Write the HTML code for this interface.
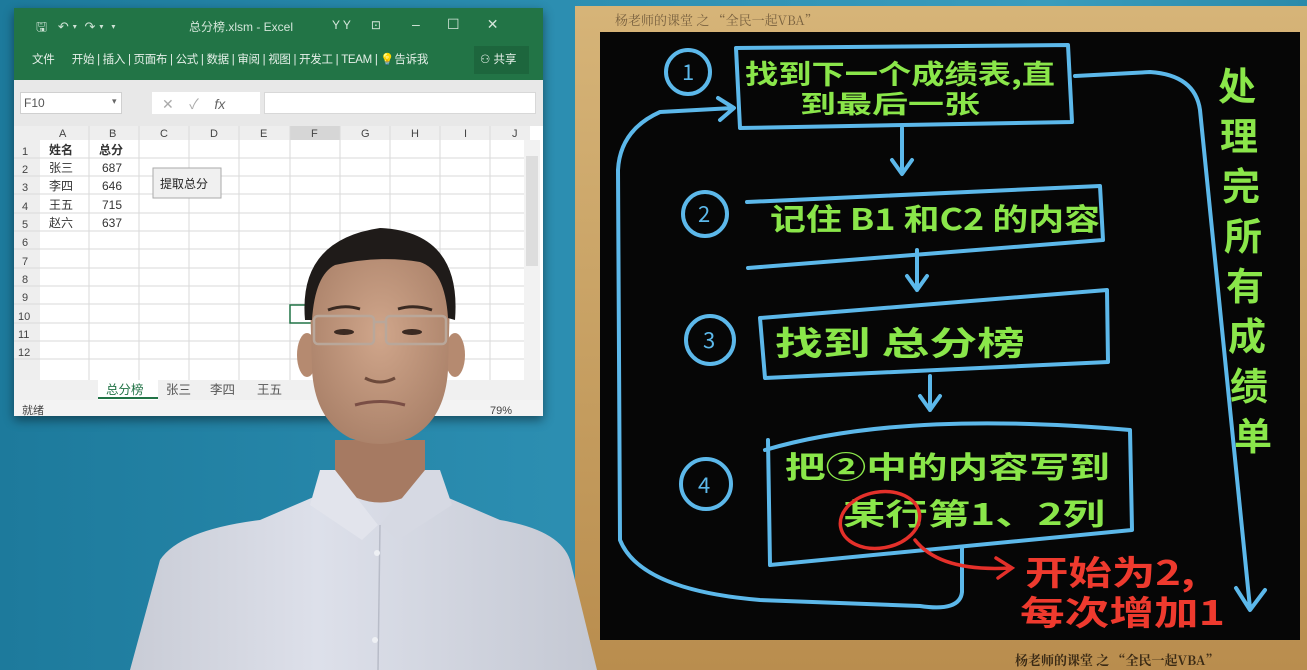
<!DOCTYPE html>
<html><head><meta charset="utf-8"><style>
*{margin:0;padding:0;box-sizing:border-box}
body{width:1307px;height:670px;overflow:hidden;position:relative;background:linear-gradient(90deg,#1d7a9c 0%,#2b8db0 40%,#3a9cbd 80%,#2a8aaa 100%);font-family:"Liberation Sans","Noto Sans CJK SC",sans-serif}
.abs{position:absolute}
#xl{left:14px;top:8px;width:529px;height:408px;background:#fff;box-shadow:0 4px 10px rgba(0,0,0,.45)}
.t{position:absolute;white-space:nowrap}
</style></head><body>
<div id="xl" class="abs">
 <div class="abs" style="left:0;top:0;width:529px;height:72px;background:#227446"></div>
 <div class="t" style="left:22px;top:10px;color:#cfe3d6;font-size:13px">🖫&nbsp;&nbsp;&nbsp;↶ ▾&nbsp;&nbsp;↷ ▾&nbsp;&nbsp;▾</div>
 <div class="t" style="left:175px;top:10px;color:#d4e6da;font-size:12px">总分榜.xlsm - Excel</div>
 <div class="t" style="left:318px;top:10px;color:#d4e6da;font-size:12px">Y Y&nbsp;&nbsp;&nbsp;&nbsp;&nbsp;&nbsp;⊡</div>
 <div class="t" style="left:398px;top:8px;color:#d4e6da;font-size:14px">–&nbsp;&nbsp;&nbsp;&nbsp;&nbsp;&nbsp;&nbsp;☐&nbsp;&nbsp;&nbsp;&nbsp;&nbsp;&nbsp;&nbsp;✕</div>
 <div class="t" style="left:18px;top:43px;color:#e6f0e9;font-size:11.5px;letter-spacing:-0.3px">文件&nbsp;&nbsp;&nbsp;&nbsp;&nbsp;&nbsp;开始 | 插入 | 页面布 | 公式 | 数据 | 审阅 | 视图 | 开发工 | TEAM | 💡告诉我</div>
 <div class="abs" style="left:460px;top:38px;width:55px;height:28px;background:#1d663d"></div>
 <div class="t" style="left:466px;top:43px;color:#e6f0e9;font-size:11.5px">⚇ 共享</div>
 <div class="abs" style="left:0;top:72px;width:529px;height:46px;background:#e8e8e8"></div>
 <div class="abs" style="left:6px;top:84px;width:102px;height:22px;background:#fff;border:1px solid #d0d0d0"></div>
 <div class="t" style="left:10px;top:88px;color:#555;font-size:12px">F10</div>
 <div class="t" style="left:98px;top:88px;color:#666;font-size:9px">▾</div>
 <div class="abs" style="left:138px;top:84px;width:108px;height:22px;background:#fff"></div>
 <div class="t" style="left:148px;top:86px;color:#aaa;font-size:14px">✕&nbsp;&nbsp;&nbsp;&nbsp;✓&nbsp;&nbsp;&nbsp;&nbsp;<i style="color:#666">fx</i></div>
 <div class="abs" style="left:250px;top:84px;width:272px;height:22px;background:#fff;border:1px solid #d8d8d8"></div>
 <svg class="abs" style="left:0;top:118px" width="529" height="290">
  <rect x="0" y="0" width="529" height="290" fill="#fff"/>
  <rect x="0" y="0" width="516" height="14" fill="#eeeeee"/>
  <rect x="0" y="14" width="26" height="240" fill="#eeeeee"/>
  <rect x="276" y="0" width="50" height="14" fill="#d6d6d6"/>
  <g stroke="#dadada" stroke-width="1">
   <line x1="75" y1="0" x2="75" y2="254"/><line x1="125" y1="0" x2="125" y2="254"/><line x1="175" y1="0" x2="175" y2="254"/><line x1="225" y1="0" x2="225" y2="254"/><line x1="276" y1="0" x2="276" y2="254"/><line x1="326" y1="0" x2="326" y2="254"/><line x1="376" y1="0" x2="376" y2="254"/><line x1="426" y1="0" x2="426" y2="254"/><line x1="476" y1="0" x2="476" y2="254"/>
   <line x1="0" y1="32" x2="510" y2="32"/><line x1="0" y1="50" x2="510" y2="50"/><line x1="0" y1="68" x2="510" y2="68"/><line x1="0" y1="87" x2="510" y2="87"/><line x1="0" y1="105" x2="510" y2="105"/><line x1="0" y1="123" x2="510" y2="123"/><line x1="0" y1="142" x2="510" y2="142"/><line x1="0" y1="160" x2="510" y2="160"/><line x1="0" y1="178" x2="510" y2="178"/><line x1="0" y1="197" x2="510" y2="197"/><line x1="0" y1="215" x2="510" y2="215"/><line x1="0" y1="233" x2="510" y2="233"/>
  </g>
  <rect x="276" y="179" width="50" height="18" fill="none" stroke="#217346" stroke-width="1.5"/>
  <rect x="510" y="14" width="16" height="240" fill="#f2f2f2"/><rect x="512" y="30" width="12" height="110" fill="#ddd"/>
  <g font-size="11" fill="#444" font-family="Liberation Sans">
   <text x="45" y="11">A</text><text x="95" y="11">B</text><text x="146" y="11">C</text><text x="196" y="11">D</text><text x="246" y="11">E</text><text x="297" y="11">F</text><text x="347" y="11">G</text><text x="397" y="11">H</text><text x="450" y="11">I</text><text x="498" y="11">J</text>
   <text x="8" y="29">1</text><text x="8" y="47">2</text><text x="8" y="65">3</text><text x="8" y="84">4</text><text x="8" y="102">5</text><text x="8" y="120">6</text><text x="8" y="139">7</text><text x="8" y="157">8</text><text x="8" y="175">9</text><text x="4" y="194">10</text><text x="4" y="212">11</text><text x="4" y="230">12</text>
  </g>
  <g font-size="12" fill="#333" font-family="Liberation Sans,Noto Sans CJK SC">
   <text x="35" y="28" font-weight="bold">姓名</text><text x="85" y="28" font-weight="bold">总分</text>
   <text x="35" y="46">张三</text><text x="88" y="46">687</text>
   <text x="35" y="64">李四</text><text x="88" y="64">646</text>
   <text x="35" y="83">王五</text><text x="88" y="83">715</text>
   <text x="35" y="101">赵六</text><text x="88" y="101">637</text>
  </g>
  <rect x="139" y="42" width="68" height="30" fill="#f0f0f0" stroke="#aaa"/>
  <text x="146" y="62" font-size="12" fill="#222" font-family="Noto Sans CJK SC">提取总分</text>
  <rect x="0" y="254" width="529" height="20" fill="#f0f0f0"/>
  <rect x="84" y="254" width="60" height="20" fill="#fff"/>
  <line x1="84" y1="272" x2="144" y2="272" stroke="#217346" stroke-width="2"/>
  <g font-size="12.5" fill="#555" font-family="Noto Sans CJK SC"><text x="92" y="268" fill="#217346">总分榜</text><text x="152" y="268">张三</text><text x="196" y="268">李四</text><text x="243" y="268">王五</text></g>
  <rect x="0" y="274" width="529" height="16" fill="#f3f3f3"/>
  <text x="8" y="288" font-size="11" fill="#444" font-family="Noto Sans CJK SC">就绪</text>
  <text x="476" y="288" font-size="11" fill="#444">79%</text>
 </svg>
</div>

<div class="abs" style="left:575px;top:6px;width:732px;height:664px;background:linear-gradient(180deg,#d6b478,#b98d4e);"></div>
<div class="abs" style="left:600px;top:32px;width:700px;height:608px;background:#060606"></div>
<div class="t" style="left:615px;top:10px;font-size:13px;color:#7a6240;font-family:'Noto Serif CJK SC',serif">杨老师的课堂 之 “全民一起VBA”</div>
<div class="t" style="left:1015px;top:650px;font-size:13px;color:#3a2a15;font-family:'Noto Serif CJK SC',serif;font-weight:bold">杨老师的课堂 之 “全民一起VBA”</div>
<svg class="abs" style="left:0;top:0" width="1307" height="670">
 <g fill="none" stroke="#5cb8ea" stroke-width="4" stroke-linecap="round" stroke-linejoin="round">
  <circle cx="688" cy="72" r="22"/><circle cx="705" cy="214" r="22"/><circle cx="710" cy="340" r="24"/><circle cx="706" cy="484" r="25"/>
  <path d="M736 48 L1068 45 L1072 122 L740 128 Z"/>
  <path d="M747 202 L1100 186 L1103 240 L748 268"/>
  <path d="M760 318 L1107 290 L1108 362 L765 378 Z"/>
  <path d="M765 450 Q900 410 1130 430 L1132 530 L770 565 L768 440"/>
  <path d="M902 128 V172 M892 160 L902 174 L912 160"/>
  <path d="M917 250 V290 M907 276 L917 290 L927 276"/>
  <path d="M930 376 V410 M920 396 L930 410 L940 396"/>
  <path d="M962 547 L962 592 Q960 612 920 606 L760 600 Q640 590 620 540 L618 170 Q620 130 660 112 L733 108 M718 98 L734 108 L720 120"/>
  <path d="M1075 76 L1150 72 Q1195 75 1200 110 L1250 608 M1236 588 L1250 610 L1265 590"/>
 </g>
 <g font-family="Noto Sans CJK SC,WenQuanYi Zen Hei,sans-serif" font-weight="bold" fill="#8ae64a">
  <text x="745" y="84" font-size="27" textLength="310" lengthAdjust="spacingAndGlyphs">找到下一个成绩表,直</text>
  <text x="800" y="113" font-size="25" textLength="180" lengthAdjust="spacingAndGlyphs">到最后一张</text>
  <text x="770" y="230" font-size="30" textLength="330" lengthAdjust="spacingAndGlyphs">记住 B1 和C2 的内容</text>
  <text x="775" y="355" font-size="33" textLength="250" lengthAdjust="spacingAndGlyphs">找到 总分榜</text>
  <text x="785" y="478" font-size="30" textLength="325" lengthAdjust="spacingAndGlyphs">把②中的内容写到</text>
  <text x="843" y="525" font-size="30" textLength="262" lengthAdjust="spacingAndGlyphs">某行第1、2列</text>
  <g font-size="38">
   <text x="1218" y="100">处</text><text x="1220" y="150">理</text><text x="1222" y="200">完</text><text x="1224" y="250">所</text><text x="1226" y="300">有</text><text x="1228" y="350">成</text><text x="1230" y="400">绩</text><text x="1234" y="450">单</text>
  </g>
  <g fill="#5cb8ea" font-size="22" font-weight="normal"><text x="682" y="80">1</text><text x="698" y="222">2</text><text x="703" y="348">3</text><text x="698" y="493">4</text></g>
 </g>
 <g fill="none" stroke="#e4302a" stroke-width="3.5" stroke-linecap="round">
  <ellipse cx="880" cy="520" rx="40" ry="28" transform="rotate(-10 880 520)"/>
  <path d="M915 540 Q940 572 1010 568 M996 558 L1012 568 L998 578"/>
 </g>
 <g font-family="Noto Sans CJK SC,sans-serif" font-weight="bold" fill="#ee3a2e">
  <text x="1025" y="585" font-size="34" textLength="170" lengthAdjust="spacingAndGlyphs">开始为2,</text>
  <text x="1020" y="625" font-size="34" textLength="205" lengthAdjust="spacingAndGlyphs">每次增加1</text>
 </g>
</svg>

<svg class="abs" style="left:0;top:0" width="1307" height="670">
 <defs>
  <linearGradient id="sh" x1="0" x2="1"><stop offset="0" stop-color="#c9ccd6"/><stop offset=".4" stop-color="#dde0ea"/><stop offset="1" stop-color="#c4c8d3"/></linearGradient>
  <radialGradient id="sk" cx=".5" cy=".45" r=".6"><stop offset="0" stop-color="#d0a68b"/><stop offset="1" stop-color="#a98068"/></radialGradient>
 </defs>
 <path d="M130 670 L160 560 Q180 530 260 520 L330 490 L430 490 L500 520 Q560 530 570 560 L597 670 Z" fill="url(#sh)"/>
 <path d="M335 440 L335 485 Q380 520 425 485 L425 440 Z" fill="#a67a62"/>
 <path d="M320 470 L335 470 L378 525 L362 540 L310 505 Z" fill="#e2e4ec"/>
 <path d="M440 470 L425 470 L380 525 L398 540 L452 505 Z" fill="#d6d9e3"/>
 <line x1="380" y1="525" x2="378" y2="670" stroke="#b8bcc8" stroke-width="1.5"/>
 <circle cx="377" cy="553" r="3" fill="#eef0f4"/><circle cx="375" cy="640" r="3" fill="#eef0f4"/>
 <ellipse cx="307" cy="355" rx="10" ry="22" fill="#b58a70"/><ellipse cx="455" cy="355" rx="10" ry="22" fill="#b58a70"/>
 <path d="M310 300 Q310 250 380 245 Q452 250 450 300 L448 370 Q445 420 410 438 Q380 450 350 438 Q315 420 312 370 Z" fill="url(#sk)"/>
 <path d="M305 320 Q298 240 380 228 Q462 232 455 320 L448 318 Q445 270 420 262 Q380 255 335 265 Q315 275 312 320 Z" fill="#1f1b19"/>
 <g fill="none" stroke="#b9a79a" stroke-width="2.5"><rect x="314" y="316" width="60" height="28" rx="4"/><rect x="386" y="316" width="60" height="28" rx="4"/><line x1="374" y1="322" x2="386" y2="322"/></g>
 <g fill="#3b2a22"><ellipse cx="344" cy="332" rx="10" ry="3"/><ellipse cx="412" cy="332" rx="10" ry="3"/></g>
 <path d="M328 310 Q344 304 360 309 M398 309 Q414 304 432 310" stroke="#3a2a22" stroke-width="3" fill="none"/>
 <path d="M365 378 Q380 386 395 378" stroke="#6d4a3b" stroke-width="3" fill="none"/>
 <path d="M355 405 Q380 398 405 405" stroke="#7a4e45" stroke-width="3" fill="none"/>
</svg>
</body></html>
